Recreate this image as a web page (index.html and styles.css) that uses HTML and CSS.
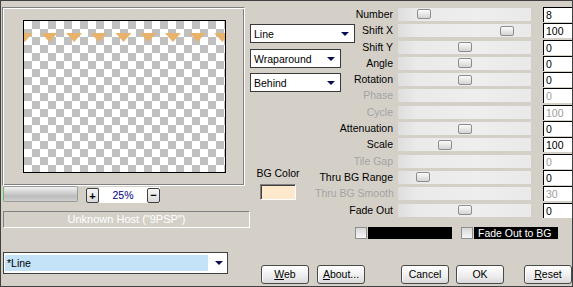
FILE: index.html
```html
<!DOCTYPE html>
<html lang="en">
<head>
    <meta charset="UTF-8">
    <meta name="viewport" content="width=device-width, initial-scale=1.0">
    <title>Kaleidoscope</title>
    <link rel="stylesheet" href="styles.css">
</head>
<body>
    <div class="window">
        <div class="left">
            <div class="frame">
                <div class="preview">
                    <svg width="201" height="151" viewBox="0 0 201 151">
                        <g fill="#e8b26a">
                            <polygon points="-7.3,12 8.7,12 0.7,21"/>
                            <polygon points="17.4,12 33.4,12 25.4,21"/>
                            <polygon points="42.1,12 58.1,12 50.1,21"/>
                            <polygon points="66.8,12 82.8,12 74.8,21"/>
                            <polygon points="91.5,12 107.5,12 99.5,21"/>
                            <polygon points="116.2,12 132.2,12 124.2,21"/>
                            <polygon points="140.9,12 156.9,12 148.9,21"/>
                            <polygon points="165.6,12 181.6,12 173.6,21"/>
                            <polygon points="190.3,12 206.3,12 198.3,21"/>
                        </g>
                    </svg>
                </div>
            </div>
            <div class="zoom-row">
                <div class="zoom-slider"></div>
                <button class="mini-btn plus">+</button>
                <div class="zoom-value">
                    <span>25%</span>
                    <button class="mini-btn">&minus;</button>
                </div>
            </div>
            <div class="host">Unknown Host ("9PSP")</div>
            <div class="preset">
                <span class="preset-text">*Line</span>
                <span class="arrow"></span>
            </div>
        </div>
        <div class="right">
            <div class="upper">
                <div class="controls">
                    <div class="select wide first"><span>Line</span><span class="arrow"></span></div>
                    <div class="select second"><span>Wraparound</span><span class="arrow"></span></div>
                    <div class="select third"><span>Behind</span><span class="arrow"></span></div>
                    <div class="bgcolor">
                        <span>BG Color</span>
                        <div class="swatch"></div>
                    </div>
                </div>
                <div class="params">
                    <div class="label">Number</div>
                    <div class="track"><div class="thumb" style="margin-left: 19px"></div></div>
                    <div class="value">8</div>

                    <div class="label">Shift X</div>
                    <div class="track"><div class="thumb" style="margin-left: 102px"></div></div>
                    <div class="value">100</div>

                    <div class="label">Shift Y</div>
                    <div class="track"><div class="thumb" style="margin-left: 60px"></div></div>
                    <div class="value">0</div>

                    <div class="label">Angle</div>
                    <div class="track"><div class="thumb" style="margin-left: 60px"></div></div>
                    <div class="value">0</div>

                    <div class="label">Rotation</div>
                    <div class="track"><div class="thumb" style="margin-left: 60px"></div></div>
                    <div class="value">0</div>

                    <div class="label off">Phase</div>
                    <div class="track"></div>
                    <div class="value off">0</div>

                    <div class="label off">Cycle</div>
                    <div class="track"></div>
                    <div class="value off">100</div>

                    <div class="label">Attenuation</div>
                    <div class="track"><div class="thumb" style="margin-left: 60px"></div></div>
                    <div class="value">0</div>

                    <div class="label">Scale</div>
                    <div class="track"><div class="thumb" style="margin-left: 40px"></div></div>
                    <div class="value">100</div>

                    <div class="label off">Tile Gap</div>
                    <div class="track"></div>
                    <div class="value off">0</div>

                    <div class="label">Thru BG Range</div>
                    <div class="track"><div class="thumb" style="margin-left: 18px"></div></div>
                    <div class="value">0</div>

                    <div class="label off">Thru BG Smooth</div>
                    <div class="track"></div>
                    <div class="value off">30</div>

                    <div class="label">Fade Out</div>
                    <div class="track"><div class="thumb" style="margin-left: 60px"></div></div>
                    <div class="value">0</div>
                </div>
            </div>
            <div class="checks">
                <div class="check"></div>
                <div class="bar"></div>
                <div class="check second-check"></div>
                <div class="bar">Fade Out to BG</div>
            </div>
            <div class="buttons">
                <button class="btn web"><u>W</u>eb</button>
                <button class="btn about"><u>A</u>bout...</button>
                <button class="btn cancel">Cancel</button>
                <button class="btn ok">OK</button>
                <button class="btn reset"><u>R</u>eset</button>
            </div>
        </div>
    </div>
</body>
</html>
```

FILE: styles.css
```css
body {
    margin: 0;
    font-family: 'Liberation Sans', Arial, sans-serif;
    font-size: 10.5px;
    color: #000;
    background: #d4d0c8;
}
.window {
    box-sizing: border-box;
    width: 573px;
    height: 287px;
    border: 1px solid #404040;
    background: #d4d0c8;
    display: flex;
    overflow: hidden;
}
.left {
    width: 249px;
    flex-shrink: 0;
}
.frame {
    box-sizing: border-box;
    width: 243px;
    height: 179px;
    margin: 6px 0 0 1px;
    padding: 12px 0 0 20px;
    border-top: 1px solid #808080;
    border-left: 1px solid #808080;
    border-right: 1px solid #fff;
    border-bottom: 1px solid #fff;
    box-shadow: inset 1px 1px 0 #fff, inset -1px -1px 0 #808080;
}
.preview {
    box-sizing: border-box;
    width: 203px;
    height: 153px;
    border: 1px solid #000;
    background-color: #fff;
    background-image: conic-gradient(#c0c0c0 25%, #fff 0 50%, #c0c0c0 0 75%, #fff 0);
    background-size: 16px 16px;
}
.preview svg {
    display: block;
}
.zoom-row {
    display: flex;
    align-items: flex-start;
    height: 17px;
    margin-left: 2px;
}
.zoom-slider {
    box-sizing: border-box;
    width: 75px;
    height: 16px;
    border: 1px solid #9a9a9a;
    border-left: 1px solid #5cc05c;
    border-radius: 2px;
    background: linear-gradient(#f2f2f2, #d6d6d6 35%, #bcbcbc 65%, #cfcfcf);
}
.mini-btn {
    box-sizing: border-box;
    width: 13px;
    height: 15px;
    padding: 0;
    border: 1px solid #404040;
    border-radius: 2px;
    background: linear-gradient(#f6f6f6, #dadada);
    font-family: 'Liberation Sans', Arial, sans-serif;
    font-size: 11px;
    font-weight: bold;
    line-height: 12px;
    color: #000;
}
.plus {
    margin: 2px 0 0 8px;
}
.zoom-value {
    display: flex;
    align-items: center;
    width: 61px;
    height: 16px;
    margin-top: 1px;
    background: #fff;
}
.zoom-value span {
    flex: 1;
    text-align: center;
    color: #000080;
}
.host {
    box-sizing: border-box;
    width: 247px;
    height: 17px;
    margin: 8px 0 0 2px;
    border-top: 1px solid #808080;
    border-left: 1px solid #808080;
    border-right: 1px solid #fff;
    border-bottom: 1px solid #fff;
    color: #fff;
    font-size: 11px;
    line-height: 15px;
    text-align: center;
}
.preset {
    box-sizing: border-box;
    display: flex;
    align-items: center;
    width: 225px;
    height: 22px;
    margin: 24px 0 0 2px;
    padding-left: 1px;
    border: 1px solid #404040;
    background: #fff;
}
.preset-text {
    box-sizing: border-box;
    width: 203px;
    height: 16px;
    padding-left: 2px;
    line-height: 16px;
    background: #c4e3f8;
}
.preset .arrow {
    margin-left: 7px;
}
.arrow {
    width: 0;
    height: 0;
    border-left: 4px solid transparent;
    border-right: 4px solid transparent;
    border-top: 4px solid #0c0c50;
}
.right {
    flex: 1;
    display: flex;
    flex-direction: column;
}
.upper {
    display: flex;
    align-items: flex-start;
}
.controls {
    width: 65px;
    flex-shrink: 0;
}
.select {
    box-sizing: border-box;
    display: flex;
    align-items: center;
    justify-content: space-between;
    width: 91px;
    height: 19px;
    padding: 0 5px 0 3px;
    border: 1px solid #3a3a3a;
    background: #fff;
}
.select.wide {
    width: 105px;
}
.select.first {
    margin-top: 23px;
}
.select.second {
    margin-top: 6px;
}
.select.third {
    margin-top: 5px;
}
.bgcolor {
    display: flex;
    flex-direction: column;
    align-items: center;
    width: 56px;
    margin-top: 74.5px;
    line-height: 13px;
}
.swatch {
    box-sizing: border-box;
    width: 36px;
    height: 16px;
    margin-top: 4.5px;
    border-top: 1px solid #808080;
    border-left: 1px solid #808080;
    border-right: 1px solid #fff;
    border-bottom: 1px solid #fff;
    box-shadow: inset 1px 1px 0 #404040;
    background: #fee9cc;
}
.params {
    display: grid;
    grid-template-columns: 79px 149px 29px;
    grid-template-rows: repeat(13, 16.3px);
    align-items: center;
    margin-top: 5.35px;
}
.label {
    padding-right: 1px;
    text-align: right;
    white-space: nowrap;
    line-height: 13px;
}
.label.off {
    color: #a3a3a3;
}
.track {
    display: flex;
    align-items: center;
    width: 133px;
    height: 13px;
    margin-left: 4px;
    background: linear-gradient(to right, #dedede, #eaeaea 14%, #eeeeee 60%, #e9e9e9);
}
.thumb {
    box-sizing: border-box;
    width: 14px;
    height: 10px;
    border: 1px solid #8d8d8d;
    border-radius: 2px;
    background: linear-gradient(#fbfbfb, #d4d4d4);
}
.value {
    box-sizing: border-box;
    height: 15px;
    padding-left: 2px;
    border-left: 1px solid #000;
    border-top: 1px solid #000;
    background: #fff;
    line-height: 14px;
}
.value.off {
    color: #9c9c9c;
}
.checks {
    display: flex;
    align-items: center;
    height: 12px;
    margin: 8.75px 0 0 105px;
}
.check {
    box-sizing: border-box;
    width: 12px;
    height: 12px;
    border: 1px solid #8e8f8f;
    background: linear-gradient(#d8d8d8, #f6f6f6);
}
.second-check {
    margin-left: 9px;
}
.bar {
    box-sizing: border-box;
    width: 84px;
    height: 12px;
    margin-left: 1px;
    padding-left: 4px;
    background: #000;
    color: #fff;
    line-height: 12px;
}
.buttons {
    display: flex;
    margin-top: 26px;
}
.btn {
    box-sizing: border-box;
    width: 48px;
    height: 19px;
    padding: 0;
    border: 1px solid #4a4a4a;
    border-radius: 3px;
    background: linear-gradient(#ffffff, #ededed 60%, #d9d9d9);
    box-shadow: inset 1px 1px 0 #fff;
    font-family: 'Liberation Sans', Arial, sans-serif;
    font-size: 10.5px;
    color: #000;
}
.web {
    margin-left: 11px;
}
.about {
    margin-left: 8px;
}
.cancel {
    margin-left: 36px;
}
.ok {
    margin-left: 7px;
}
.reset {
    margin-left: 20px;
}
```
